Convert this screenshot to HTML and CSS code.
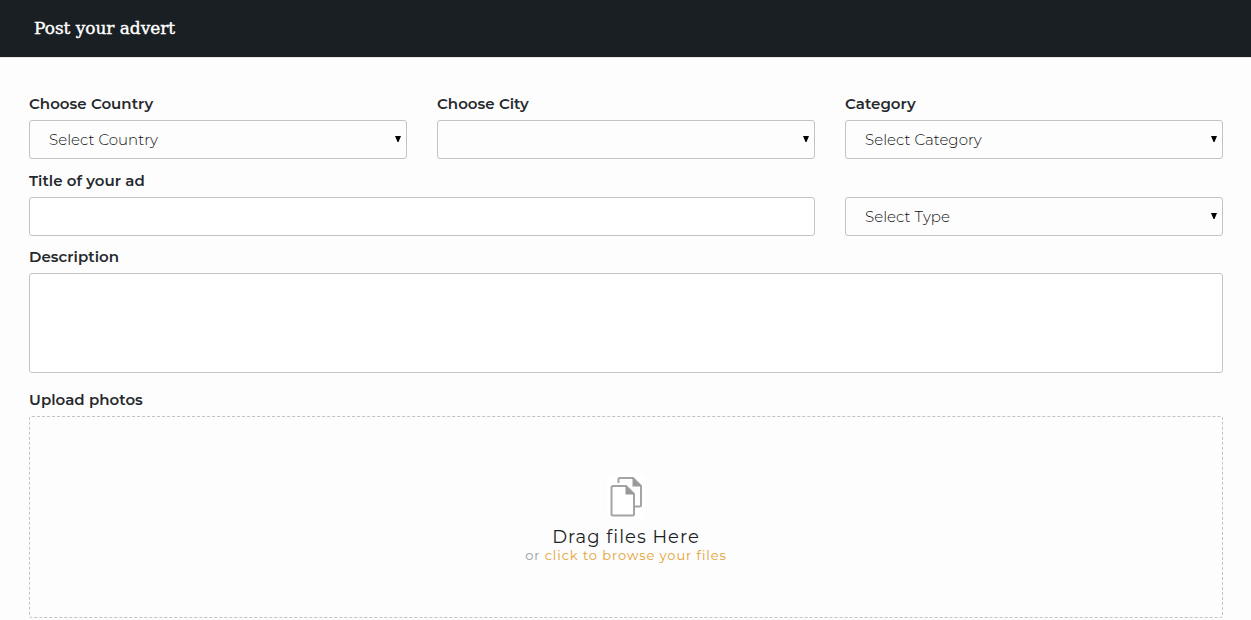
FILE: index.html
```html
<!DOCTYPE html>
<html lang="en">
<head>
<meta charset="utf-8">
<title>Post your advert</title>
<link rel="stylesheet" href="styles.css">
</head>
<body>
<header class="page-header"><h1 class="page-title">Post your advert</h1></header>
<form class="advert-form">
  <div class="field">
    <label class="label" for="country"><span>Choose Country</span></label>
    <div class="select-wrap"><select class="control select" id="country"><option>Select Country</option></select><svg class="arrow" viewBox="0 0 6 6"><path d="M0 0H6L3.5 6H2.5Z"/></svg></div>
  </div>
  <div class="field">
    <label class="label" for="city"><span>Choose City</span></label>
    <div class="select-wrap"><select class="control select" id="city"></select><svg class="arrow" viewBox="0 0 6 6"><path d="M0 0H6L3.5 6H2.5Z"/></svg></div>
  </div>
  <div class="field">
    <label class="label" for="category"><span>Category</span></label>
    <div class="select-wrap"><select class="control select" id="category"><option>Select Category</option></select><svg class="arrow" viewBox="0 0 6 6"><path d="M0 0H6L3.5 6H2.5Z"/></svg></div>
  </div>
  <div class="field field-title">
    <label class="label" for="ad-title"><span>Title of your ad</span></label>
    <input class="control" id="ad-title" type="text">
  </div>
  <div class="field field-type">
    <div class="select-wrap"><select class="control select" aria-label="Type"><option>Select Type</option></select><svg class="arrow" viewBox="0 0 6 6"><path d="M0 0H6L3.5 6H2.5Z"/></svg></div>
  </div>
  <div class="field field-full">
    <label class="label" for="description"><span>Description</span></label>
    <textarea class="control textarea" id="description"></textarea>
  </div>
  <div class="field field-full field-upload">
    <div class="label"><span>Upload photos</span></div>
    <div class="dropzone">
      <svg class="files-icon" viewBox="0 0 38 45">
        <rect width="38" height="45" fill="#fff"/>
        <path d="M11.500 9V5.500Q11.500 4 13 4H26L34 12V31Q34 32.500 32.500 32.500H27" fill="none" stroke="#a4a4a4" stroke-width="2"/>
        <path d="M25.500 3.500L34.500 12.500H25.500Z" fill="#999"/>
        <path d="M6 12H19L27 20V40Q27 41.500 25.500 41.500H6Q4.500 41.500 4.500 40V13.500Q4.500 12 6 12Z" fill="#fff" stroke="#a4a4a4" stroke-width="2"/>
        <path d="M18.500 11.500L27.500 20.500H18.500Z" fill="#999"/>
      </svg>
      <div class="drop-title">Drag files Here</div>
      <div class="drop-hint">or <a class="browse">click to browse your files</a></div>
    </div>
  </div>
</form>
</body>
</html>
```
FILE: styles.css
```css
* { box-sizing: border-box; }
body {
  margin: 0;
  height: 620px;
  overflow: hidden;
  background: #fdfdfd;
  color: #1b1f24;
  font-family: Montserrat, Inter, sans-serif;
}
.page-header {
  height: 58px;
  padding: 16px 34px 0;
  border-bottom: 1px solid #e4e4e4;
  background: #1a1f23;
}
.page-title {
  margin: 0;
  color: #fff;
  font: 400 17px/24px "Roboto Slab", "DejaVu Serif", serif;
  letter-spacing: -0.05px;
  -webkit-text-stroke: 0.4px #fff;
}
.advert-form {
  display: grid;
  grid-template-columns: repeat(3, 378px);
  column-gap: 30px;
  padding: 34px 29px 0;
}
.field { display: flex; flex-direction: column; }
.label {
  display: block;
  height: 28px;
  padding-top: 2px;
  color: #25292d;
  font-size: 15px;
  font-weight: 600;
  line-height: 20px;
  letter-spacing: 0.04px;
}
.control {
  display: block;
  width: 100%;
  height: 39px;
  margin: 0;
  border: 1px solid #c3c3c3;
  border-radius: 3px;
  background: #fff;
  outline: none;
}
.select-wrap { position: relative; }
.select {
  appearance: none;
  padding: 0 19px 1px;
  background: transparent;
  color: #111;
  font: 300 15px Montserrat, Inter, sans-serif;
  letter-spacing: 0.03px;
}
.arrow {
  position: absolute;
  top: 16px;
  right: 6px;
  width: 6px;
  height: 6px;
}
.field-title { grid-column: span 2; margin-top: 10px; }
.field-type { margin-top: 38px; }
.field-full { grid-column: span 3; margin-top: 9px; }
.textarea { height: 100px; resize: none; }
.field-upload { margin-top: 15px; }
.dropzone {
  display: flex;
  flex-direction: column;
  align-items: center;
  height: 202px;
  padding-top: 57px;
  border: 1px dashed #c3c3c3;
  border-radius: 3px;
}
.files-icon { width: 38px; height: 45px; }
.drop-title {
  margin-top: 7px;
  font-size: 18px;
  line-height: 22px;
  letter-spacing: 1px;
}
.drop-hint {
  margin-top: -1px;
  color: #969a9e;
  font-size: 13px;
  line-height: 16px;
  letter-spacing: 0.93px;
}
.browse { color: #e3a232; }
```
